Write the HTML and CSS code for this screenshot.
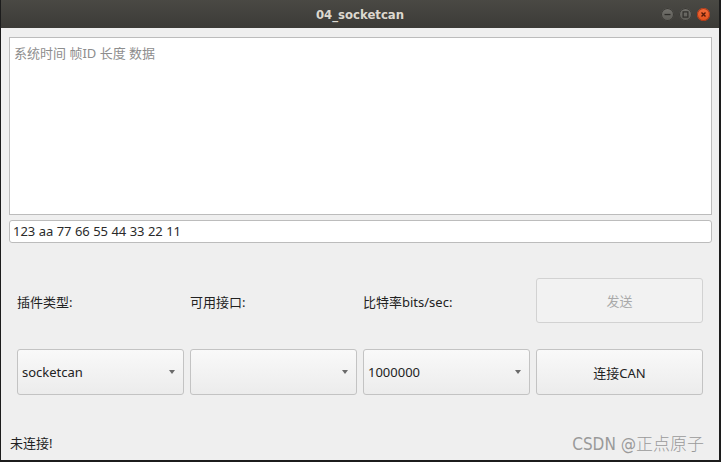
FILE: index.html
```html
<!DOCTYPE html>
<html lang="zh">
<head>
<meta charset="utf-8">
<title>04_socketcan</title>
<link rel="stylesheet" href="styles.css">
</head>
<body>
<div class="window">
  <div class="titlebar">
    <span class="title">04_socketcan</span>
    <div class="wbtns">
      <span class="wbtn"><svg width="13" height="13" viewBox="0 0 13 13"><rect x="3.5" y="5.9" width="6" height="1.3" fill="#2e2d2a"/></svg></span>
      <span class="wbtn"><svg width="13" height="13" viewBox="0 0 13 13"><rect x="4.1" y="3.9" width="4.8" height="5.2" fill="none" stroke="#2e2d2a" stroke-width="1.2"/></svg></span>
      <span class="wbtn close"><svg width="13" height="13" viewBox="0 0 13 13"><path d="M4.5 4.5L8.5 8.5M8.5 4.5L4.5 8.5" stroke="#5a1a08" stroke-width="1.4"/></svg></span>
    </div>
  </div>
  <div class="content">
    <div class="textarea">系统时间 帧ID 长度 数据</div>
    <div class="lineedit">123 aa 77 66 55 44 33 22 11</div>
    <div class="grid">
      <div class="label">插件类型:</div>
      <div class="label">可用接口:</div>
      <div class="label">比特率bits/sec:</div>
      <div class="btn disabled">发送</div>
      <div class="combo"><span>socketcan</span><i class="arrow"></i></div>
      <div class="combo"><span></span><i class="arrow"></i></div>
      <div class="combo"><span>1000000</span><i class="arrow"></i></div>
      <div class="btn">连接CAN</div>
    </div>
    <div class="status">
      <span>未连接!</span>
      <span class="wm">CSDN @正点原子</span>
    </div>
  </div>
</div>
</body>
</html>
```

FILE: styles.css
```css
* { box-sizing: border-box; }
html, body { margin: 0; padding: 0; background: #efefef; }
body {
  font-family: "Noto Sans", "Noto Sans CJK SC", sans-serif;
  font-size: 13px;
  color: #222;
}
.window {
  width: 721px;
  height: 462px;
  display: flex;
  flex-direction: column;
  background: #efefef;
  border-left: 1px solid #1c1c1c;
  border-right: 2px solid #1c1c1c;
  border-bottom: 2px solid #1c1c1c;
}
.titlebar {
  height: 28px;
  flex: none;
  background: linear-gradient(#4a4944, #3c3b37);
  display: flex;
  align-items: center;
  justify-content: center;
  position: relative;
}
.title {
  color: #dcd8cf;
  font-family: "DejaVu Sans Condensed", "DejaVu Sans", sans-serif;
  font-weight: bold;
  font-size: 13px;
}
.wbtns {
  position: absolute;
  right: 9px;
  top: 8px;
  display: flex;
  gap: 5px;
}
.wbtn {
  width: 13px;
  height: 13px;
  border-radius: 50%;
  background: linear-gradient(#74736e, #5b5a55);
  display: flex;
  align-items: center;
  justify-content: center;
  box-shadow: inset 0 0 0 1px #3a3935;
}
.wbtn.close {
  background: linear-gradient(#f46d3c, #e2521d);
  box-shadow: inset 0 0 0 1px #a8391a;
}
.content {
  flex: 1;
  display: flex;
  flex-direction: column;
  padding: 9px 7px 0 8px;
}
.textarea {
  height: 178px;
  background: #fff;
  border: 1px solid #bcbcbc;
  color: #8d8d8d;
  padding: 6px 4px;
  line-height: 18px;
}
.lineedit {
  margin-top: 5px;
  height: 23px;
  background: #fff;
  border: 1px solid #bcbcbc;
  border-radius: 3px;
  padding: 0 3px;
  line-height: 21px;
  color: #2a2a2a;
}
.grid {
  margin-top: 35px;
  margin-left: 8px;
  display: grid;
  grid-template-columns: repeat(4, 167px);
  grid-template-rows: 45px 46px;
  column-gap: 6px;
  row-gap: 26px;
}
.label {
  display: flex;
  align-items: center;
  color: #222;
  padding-top: 1px;
}
.btn {
  border: 1px solid #c3c3c3;
  border-radius: 3px;
  background: linear-gradient(#f9f9f9, #ececec);
  display: flex;
  align-items: center;
  justify-content: center;
  color: #222;
}
.btn.disabled {
  background: #f2f2f2;
  border-color: #d2d2d2;
  color: #a9a9a9;
}
.combo {
  border: 1px solid #c3c3c3;
  border-radius: 3px;
  background: linear-gradient(#f9f9f9, #ececec);
  display: flex;
  align-items: center;
  justify-content: space-between;
  padding: 0 8px 0 4px;
  color: #222;
}
.arrow {
  width: 0;
  height: 0;
  border-left: 3.5px solid transparent;
  border-right: 3.5px solid transparent;
  border-top: 4px solid #6a6a6a;
}
.status {
  margin-top: auto;
  height: 36px;
  padding: 0 8px 0 1px;
  display: flex;
  justify-content: space-between;
  align-items: center;
}
.wm {
  color: #9a9a9a;
  font-size: 17px;
  font-family: "DejaVu Sans Condensed", "Noto Sans CJK SC", sans-serif;
  font-weight: 300;
  letter-spacing: 0;
}
```
